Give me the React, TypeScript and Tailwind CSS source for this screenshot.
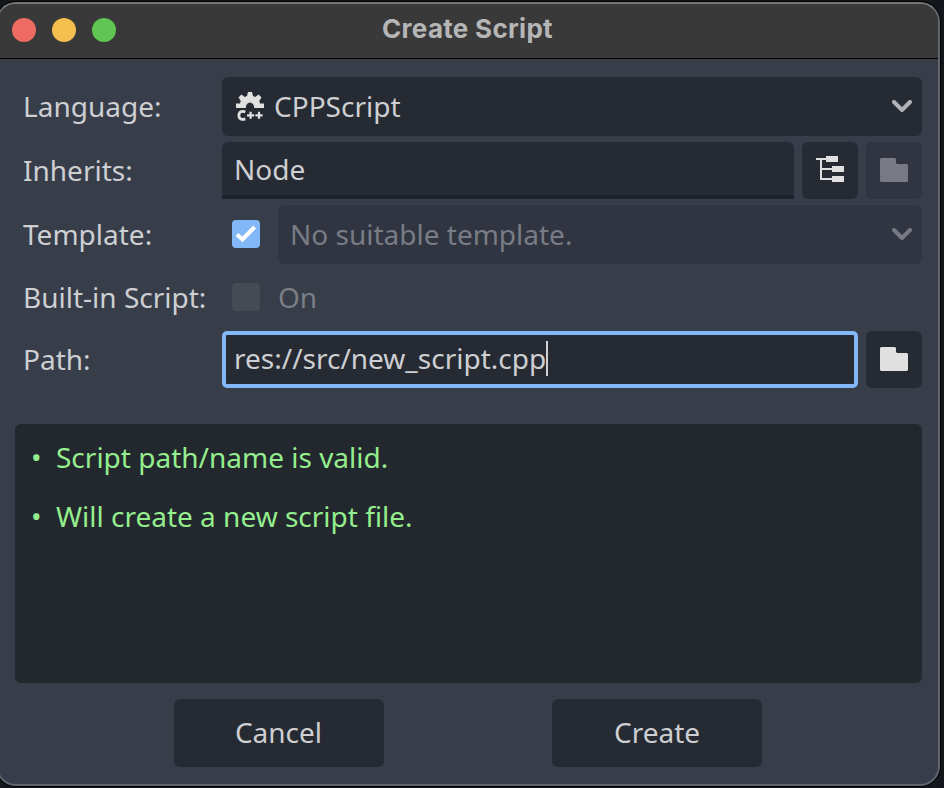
import type { ReactNode } from "react";

function Chevron({ className }: { className: string }) {
  return (
    <svg width="20" height="12" viewBox="0 0 20 12" className={className} fill="none" stroke="currentColor" strokeWidth="4" strokeLinecap="round" strokeLinejoin="round">
      <path d="M2 2 10 10 18 2" />
    </svg>
  );
}

function Folder() {
  return (
    <svg width="28" height="24" viewBox="0 0 28 24" fill="currentColor">
      <path d="M1 0H15L16 1V5L17 6H27L28 7V23L27 24H1L0 23V1Z" />
    </svg>
  );
}

function Tree() {
  return (
    <svg width="28" height="26" viewBox="0 0 28 26" fill="#e0e0e0" shapeRendering="crispEdges">
      <path d="M0 2H10V0H22V6H10V4H6V12H16V10H28V16H16V14H6V22H16V20H28V26H16V24H4V4H0Z" />
    </svg>
  );
}

function CppIcon() {
  return (
    <svg width="28" height="30" viewBox="0 0 28 30" fill="#e0e0e0">
      <path d="M12 0H16L17 4 19.2 4.9 22.6 2.6 25.5 5.5 23.2 8.9 24.1 11.6H28V16H18.2A4.2 5.6 0 0 0 9.8 16H0V11.6H3.9L4.8 8.9 2.5 5.5 5.4 2.6 8.8 4.9 11 4Z" />
      <path d="M9.3 19.8C6 18.7 2.9 19.6 2.9 23.4S6 28 9.3 26.9" fill="none" stroke="#e0e0e0" strokeWidth="2.8" />
      <path d="M11 23.3H18.2M14.6 19.8V26.8M19.4 23.3H26.6M23 19.8V26.8" fill="none" stroke="#e0e0e0" strokeWidth="2.2" />
    </svg>
  );
}

function Row({ label, height, children }: { label: string; height: string; children: ReactNode }) {
  return (
    <div className={`flex items-center ${height}`}>
      <div className="w-[199px] shrink-0 whitespace-nowrap pb-[2px]">{label}</div>
      <div className="flex h-full flex-1 items-center gap-2">{children}</div>
    </div>
  );
}

function Message({ text }: { text: string }) {
  return (
    <li className="flex h-[38px] items-center">
      <span className="w-[25px]">•</span>
      <span>{text}</span>
    </li>
  );
}

export default function App() {
  return (
    <div className="h-[788px] w-[944px] overflow-hidden bg-[#13171c] pt-[2px] font-['Noto_Sans',sans-serif] text-[28px] leading-[38px] text-[#cdcfd2]">
      <div className="-ml-[4px] flex h-[784px] w-[944px] flex-col overflow-hidden rounded-[20px] border-2 border-[#60656e] border-t-[#777777] bg-[#383d4a] shadow-[0_0_0_1px_#000]">
        <header className="grid h-[55px] shrink-0 grid-cols-[1fr_auto_1fr] items-center border-b border-black bg-[#393939] pb-[3px] pl-[14px] pr-[15px]">
          <div className="flex gap-4">
            <span className="size-6 rounded-full bg-[#ed6b60]" />
            <span className="size-6 rounded-full bg-[#f5bf4f]" />
            <span className="size-6 rounded-full bg-[#61c554]" />
          </div>
          <h1 className="pb-[2px] font-['Inter',sans-serif] text-[26px] font-bold leading-8 tracking-[0.3px] text-[#b6b6b6]">Create Script</h1>
        </header>
        <main className="flex flex-1 flex-col pl-[17px] pr-4 pt-[18px]">
          <div className="flex flex-col gap-[6px] pl-2">
            <Row label="Language:" height="h-[59px]">
              <div className="flex h-full flex-1 items-center rounded-[6px] bg-[#262a33] pb-[2px] pl-[14px] pr-[10px]">
                <span className="pt-[2px]"><CppIcon /></span>
                <span className="ml-[10px] flex-1">CPPScript</span>
                <Chevron className="text-[#b2b3b7]" />
              </div>
            </Row>
            <Row label="Inherits:" height="h-[57px]">
              <div className="flex h-full flex-1 items-center rounded-t-[6px] border-b-4 border-[#1e222a] bg-[#262a33] pl-3">Node</div>
              <button className="flex h-full w-14 items-center justify-center rounded-[6px] bg-[#262a33] pb-[3px]"><Tree /></button>
              <button className="flex h-full w-14 items-center justify-center rounded-[6px] bg-[#303541] pb-[2px] text-[#777a82]"><Folder /></button>
            </Row>
            <Row label="Template:" height="h-[59px]">
              <div className="mb-[2px] ml-[10px] flex size-7 items-center justify-center rounded-[4px] bg-[#83b8f8]">
                <svg width="20" height="18" viewBox="0 0 20 18" fill="none" stroke="#fff" strokeWidth="4"><path d="M1 9.5 6.5 14.4 18.6 2" /></svg>
              </div>
              <div className="ml-[10px] flex h-full flex-1 items-center rounded-[6px] bg-[#303541] pb-[2px] pl-3 pr-[10px] text-[#797c84]">
                <span className="flex-1">No suitable template.</span>
                <Chevron className="text-[#777a82]" />
              </div>
            </Row>
            <Row label="Built-in Script:" height="h-[55px]">
              <div className="mb-[2px] ml-[10px] size-7 rounded-[4px] bg-[#464a53]" />
              <span className="ml-[10px] pb-[2px] text-[#7b7e85]">On</span>
            </Row>
            <Row label="Path:" height="h-[57px]">
              <div className="flex h-full flex-1 items-center rounded-[5px] border-4 border-[#83b8f8] bg-[#262a33] pb-[2px] pl-2">
                <span className="pb-[2px]">res://src/new_script.cpp</span>
                <span className="h-[35px] w-[2px] bg-[#cdcfd2]" />
              </div>
              <button className="flex h-full w-14 items-center justify-center rounded-[6px] bg-[#262a33] pb-[2px] text-[#e0e0e0]"><Folder /></button>
            </Row>
          </div>
          <ul className="mt-9 flex h-[259px] flex-col gap-[21px] rounded-[6px] bg-[#23272e] pl-4 pt-[14px] text-[#95ee8d]">
            <Message text="Script path/name is valid." />
            <Message text="Will create a new script file." />
          </ul>
          <footer className="mt-4 flex gap-[168px] pl-[159px]">
            <button className="h-[68px] w-[210px] rounded-[6px] bg-[#262a33] pb-[2px] pr-px">Cancel</button>
            <button className="h-[68px] w-[210px] rounded-[6px] bg-[#262a33] pb-[2px]">Create</button>
          </footer>
        </main>
      </div>
    </div>
  );
}
